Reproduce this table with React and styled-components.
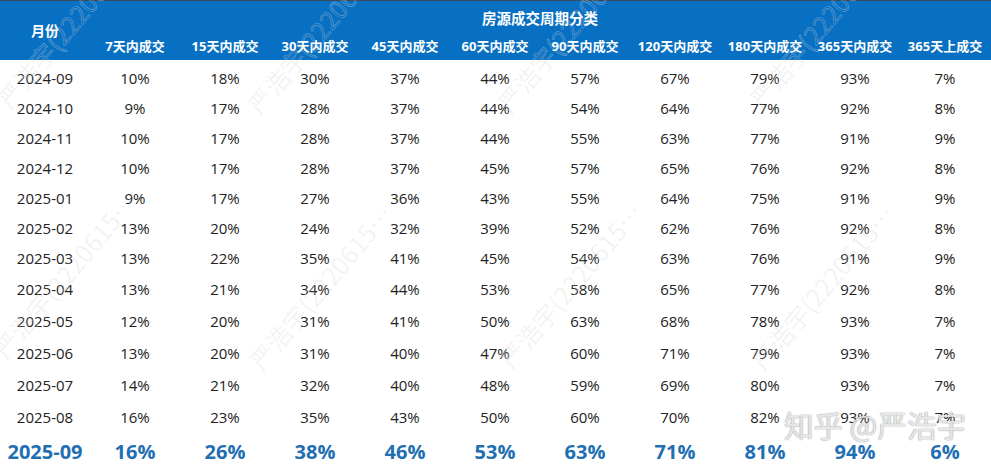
import React from "react";
import styled, { createGlobalStyle } from "styled-components";

const GlobalStyle = createGlobalStyle`
    html, body {
        margin: 0;
        padding: 0;
        background: #ffffff;
    }
    body {
        font-family: "Open Sans", "Noto Sans CJK SC", sans-serif;
    }
`

const Page = styled.div`
    position: relative;
    width: 991px;
    height: 466px;
    overflow: hidden;
    background: #ffffff;
`

const Header = styled.div`
    display: grid;
    grid-template-columns: repeat(11, 90px);
    grid-template-rows: 31px 28px;
    background: #0870c2;
    border-top: 1px solid #3b4a5a;
    color: #ffffff;
    font-weight: 700;
`

const MonthHead = styled.div`
    grid-row: 1 / 3;
    display: flex;
    align-items: center;
    justify-content: center;
    font-size: 14px;
    padding-bottom: 2px;
`

const GroupHead = styled.div`
    grid-column: 2 / 12;
    display: flex;
    align-items: center;
    justify-content: center;
    font-size: 14.5px;
    padding-top: 2px;
`

const ColHead = styled.div`
    display: flex;
    align-items: center;
    justify-content: center;
    font-size: 13px;
    white-space: nowrap;
    padding-bottom: 1px;
`

const Body = styled.div`
    padding-top: 3px;
`

const Row = styled.div`
    display: grid;
    grid-template-columns: repeat(11, 90px);
    height: ${p => p.$h}px;
    align-items: center;
    justify-items: center;
    color: ${p => p.$total ? "#1f6fb2" : "#222222"};
    font-size: ${p => p.$total ? "20px" : "15px"};
    font-weight: ${p => p.$total ? 700 : 400};
`

const Cell = styled.div`
    white-space: nowrap;
`

const Overlay = styled.div`
    position: absolute;
    inset: 0;
    pointer-events: none;
`

const Mark = styled.div`
    position: absolute;
    font-family: "Noto Sans CJK SC", "Open Sans", sans-serif;
    font-size: 25px;
    line-height: 25px;
    white-space: nowrap;
    color: rgba(120, 120, 120, 0.1);
    -webkit-text-stroke: 0.6px rgba(255, 255, 255, 0.35);
    transform-origin: 0 100%;
    transform: rotate(-50deg);
`

const Zhihu = styled.div`
    position: absolute;
    right: 25px;
    bottom: 26px;
    font-family: "Noto Sans CJK SC", sans-serif;
    font-size: 29.5px;
    line-height: 32px;
    white-space: nowrap;
    color: rgba(255, 255, 255, 0.82);
    text-shadow: 0 0 1px rgba(0, 0, 0, 0.45), 0 0 2px rgba(0, 0, 0, 0.2);
`

const columns = ["7天内成交", "15天内成交", "30天内成交", "45天内成交", "60天内成交",
    "90天内成交", "120天内成交", "180天内成交", "365天内成交", "365天上成交"];

const rows = [
    ["2024-09", 10, 18, 30, 37, 44, 57, 67, 79, 93, 7],
    ["2024-10", 9, 17, 28, 37, 44, 54, 64, 77, 92, 8],
    ["2024-11", 10, 17, 28, 37, 44, 55, 63, 77, 91, 9],
    ["2024-12", 10, 17, 28, 37, 45, 57, 65, 76, 92, 8],
    ["2025-01", 9, 17, 27, 36, 43, 55, 64, 75, 91, 9],
    ["2025-02", 13, 20, 24, 32, 39, 52, 62, 76, 92, 8],
    ["2025-03", 13, 22, 35, 41, 45, 54, 63, 76, 91, 9],
    ["2025-04", 13, 21, 34, 44, 53, 58, 65, 77, 92, 8],
    ["2025-05", 12, 20, 31, 41, 50, 63, 68, 78, 93, 7],
    ["2025-06", 13, 20, 31, 40, 47, 60, 71, 79, 93, 7],
    ["2025-07", 14, 21, 32, 40, 48, 59, 69, 80, 93, 7],
    ["2025-08", 16, 23, 35, 43, 50, 60, 70, 82, 93, 7],
];

const total = ["2025-09", 16, 26, 38, 46, 53, 63, 71, 81, 94, 6];

// start points of the diagonal watermark text
const marks = [
    [12, 112], [262, 118], [512, 116], [764, 112],
    [8, 362], [264, 374], [514, 372], [766, 374],
];

const App = () => {
    return (
        <Page>
            <GlobalStyle />
            <Header>
                <MonthHead>月份</MonthHead>
                <GroupHead>房源成交周期分类</GroupHead>
                {columns.map(c => <ColHead key={c}>{c}</ColHead>)}
            </Header>

            <Body>
                {rows.map((r, i) => (
                    <Row key={r[0]} $h={i < 7 ? 30 : 32}>
                        {r.map((v, j) => <Cell key={j}>{j === 0 ? v : `${v}%`}</Cell>)}
                    </Row>
                ))}
                <Row $h={36} $total>
                    {total.map((v, j) => <Cell key={j}>{j === 0 ? v : `${v}%`}</Cell>)}
                </Row>
            </Body>

            <Overlay>
                {marks.map(([x, y]) => (
                    <Mark key={`${x}-${y}`} style={{ left: x, top: y - 25 }}>严浩宇(2220615…</Mark>
                ))}
                <Zhihu>知乎 @严浩宇</Zhihu>
            </Overlay>
        </Page>
    );
}

export default App;
